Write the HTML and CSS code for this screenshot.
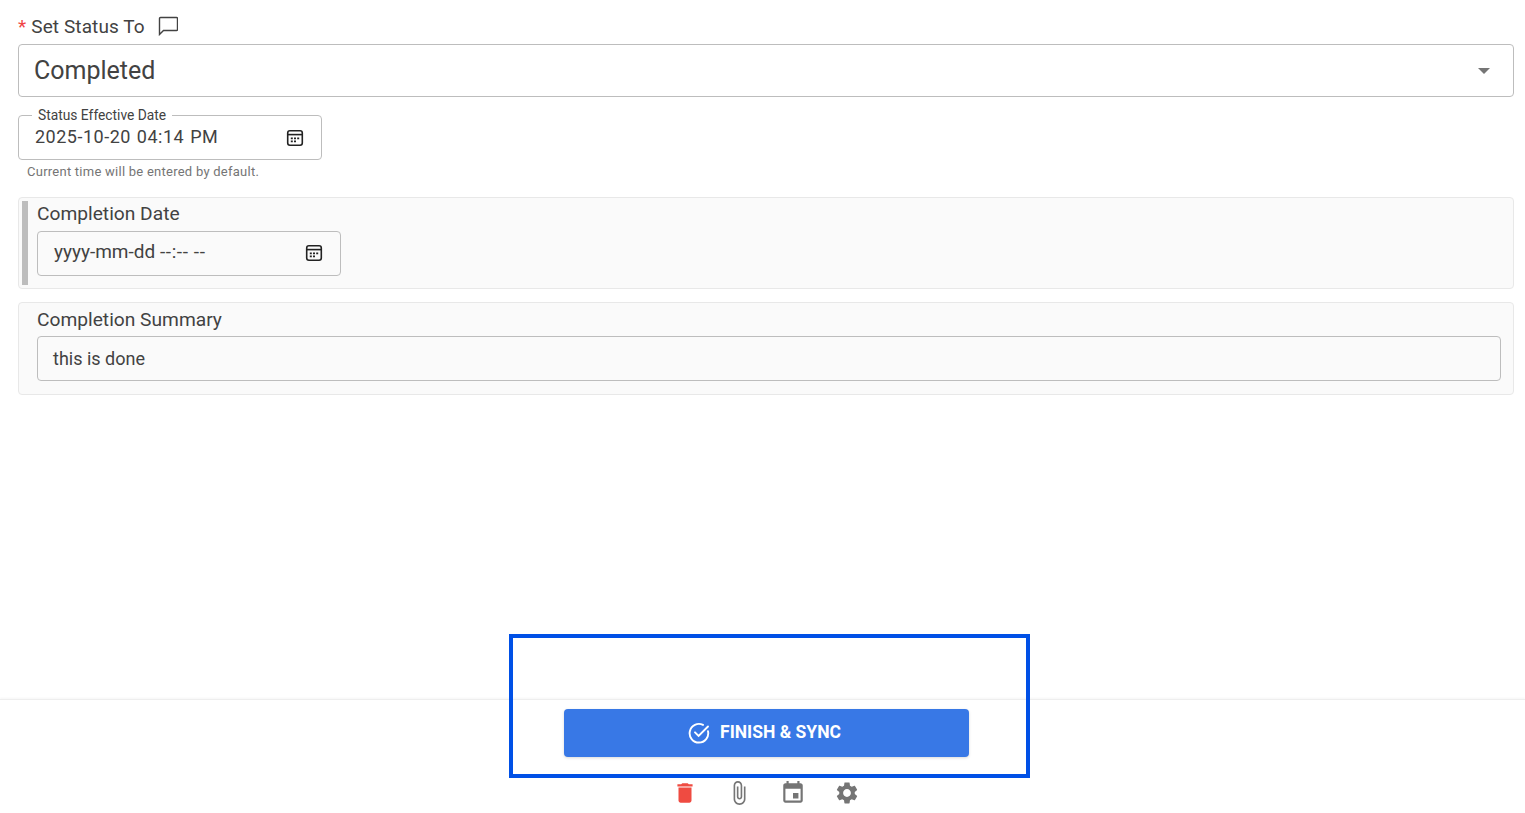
FILE: index.html
```html
<!DOCTYPE html>
<html lang="en">
<head>
    <meta charset="UTF-8">
    <meta name="viewport" content="width=device-width, initial-scale=1.0">
    <title>Set Status</title>
    <link rel="stylesheet" href="styles.css">
</head>
<body>
    <div class="page">
        <main class="form">
            <div class="status-label">
                <span class="required">*</span>
                <span>Set Status To</span>
                <svg class="comment-icon" viewBox="0 0 20 20"><path d="M1.500 18.500V2.500a1 1 0 0 1 1-1h16a1 1 0 0 1 1 1v11a1 1 0 0 1-1 1H5.500z"/></svg>
            </div>
            <div class="select-box">
                <span>Completed</span>
                <span class="caret"></span>
            </div>

            <div class="date-box">
                <span class="float-label">Status Effective Date</span>
                <span>2025-10-20 04:14 PM</span>
                <svg class="cal-icon" viewBox="0 0 18 18"><rect x="1.700" y="1.700" width="14.600" height="14.600" rx="2.200"/><path d="M1.700 5.600h14.600"/><path class="dots" d="M4.800 8.400h2v1.800h-2zM8 8.400h2v1.800H8zM11.200 8.400h2v1.800h-2zM4.800 11.400h2v1.800h-2zM8 11.400h2v1.800H8z"/></svg>
            </div>
            <div class="hint">Current time will be entered by default.</div>

            <section class="panel panel-date">
                <div class="panel-bar"></div>
                <div class="panel-body">
                    <label class="panel-label">Completion Date</label>
                    <div class="input-box input-date">
                        <span>yyyy-mm-dd <span class="time-mask">--:-- --</span></span>
                        <svg class="cal-icon" viewBox="0 0 18 18"><rect x="1.700" y="1.700" width="14.600" height="14.600" rx="2.200"/><path d="M1.700 5.600h14.600"/><path class="dots" d="M4.800 8.400h2v1.800h-2zM8 8.400h2v1.800H8zM11.200 8.400h2v1.800h-2zM4.800 11.400h2v1.800h-2zM8 11.400h2v1.800H8z"/></svg>
                    </div>
                </div>
            </section>

            <section class="panel panel-summary">
                <label class="panel-label">Completion Summary</label>
                <div class="input-box input-text">this is done</div>
            </section>
        </main>

        <footer class="footer">
            <button class="finish-btn" type="button">
                <svg class="finish-icon" viewBox="0 0 22 22"><path d="M20 9.200A9.300 9.300 0 1 1 15 2.900"/><path d="M7 10.300l3.600 3.600 9.400-9.400"/></svg>
                <span>FINISH &amp; SYNC</span>
            </button>
            <div class="actions">
                <svg class="action-icon delete" viewBox="0 0 24 24"><path d="M6 19c0 1.100.9 2 2 2h8c1.100 0 2-.9 2-2V7H6v12zM19 4h-3.500l-1-1h-5l-1 1H5v2h14V4z"/></svg>
                <svg class="action-icon" viewBox="0 0 24 24"><path d="M16.500 6v11.500c0 2.210-1.790 4-4 4s-4-1.790-4-4V5c0-1.380 1.120-2.500 2.500-2.500s2.500 1.120 2.500 2.500v10.500c0 .55-.45 1-1 1s-1-.45-1-1V6H10v9.500c0 1.380 1.120 2.500 2.500 2.500s2.500-1.120 2.500-2.500V5c0-2.210-1.790-4-4-4S7 2.790 7 5v12.500c0 3.040 2.460 5.500 5.500 5.500s5.500-2.460 5.500-5.500V6h-1.500z"/></svg>
                <svg class="action-icon" viewBox="0 0 24 24"><path d="M17 12h-5v5h5v-5zM16 1v2H8V1H6v2H5c-1.110 0-1.990.9-1.990 2L3 19c0 1.100.89 2 2 2h14c1.100 0 2-.9 2-2V5c0-1.100-.9-2-2-2h-1V1h-2zm3 18H5V8h14v11z"/></svg>
                <svg class="action-icon" viewBox="0 0 24 24"><path d="M19.140 12.940c.04-.3.06-.61.06-.94 0-.32-.02-.64-.07-.94l2.030-1.580c.18-.14.23-.41.12-.61l-1.920-3.320c-.12-.22-.37-.29-.59-.22l-2.390.96c-.5-.38-1.030-.7-1.620-.94l-.36-2.540c-.04-.24-.24-.41-.48-.41h-3.840c-.24 0-.43.17-.47.41l-.36 2.540c-.59.24-1.130.57-1.620.94l-2.390-.96c-.22-.08-.47 0-.59.22L2.740 8.870c-.12.21-.08.47.12.61l2.030 1.580c-.05.3-.09.63-.09.94s.02.64.07.94l-2.030 1.580c-.18.14-.23.41-.12.61l1.920 3.320c.12.22.37.29.59.22l2.390-.96c.5.38 1.030.7 1.620.94l.36 2.540c.05.24.24.41.48.41h3.840c.24 0 .44-.17.47-.41l.36-2.540c.59-.24 1.130-.56 1.620-.94l2.390.96c.22.08.47 0 .59-.22l1.920-3.320c.12-.22.07-.47-.12-.61l-2.010-1.580zM12 15.600c-1.980 0-3.600-1.620-3.600-3.600s1.620-3.600 3.600-3.600 3.600 1.620 3.600 3.600-1.620 3.600-3.600 3.600z"/></svg>
            </div>
        </footer>

        <div class="highlight-box"></div>
    </div>
</body>
</html>
```

FILE: styles.css
```css
html, body {
    margin: 0;
    padding: 0;
    background-color: #fff;
}
body {
    font-family: Roboto, "Liberation Sans", sans-serif;
    color: #3c4043;
}
.page {
    position: relative;
    display: flex;
    flex-direction: column;
    height: 813px;
    overflow: hidden;
}
.form {
    flex: 1;
    padding: 0 11px 0 18px;
}
.status-label {
    display: flex;
    align-items: center;
    height: 44px;
    padding-top: 10px;
    box-sizing: border-box;
    font-size: 19px;
    line-height: 34px;
    letter-spacing: 0.1px;
    color: #424242;
}
.required {
    color: #ef4444;
    margin-right: 5px;
}
.comment-icon {
    width: 20px;
    height: 20px;
    margin-left: 13px;
    margin-top: -3px;
    fill: none;
    stroke: #424242;
    stroke-width: 1.400;
}
.select-box {
    display: flex;
    align-items: center;
    justify-content: space-between;
    height: 53px;
    box-sizing: border-box;
    padding: 0 23px 0 15px;
    border: 1px solid #bdbdbd;
    border-radius: 4px;
    font-size: 25px;
    color: #424242;
}
.caret {
    width: 0;
    height: 0;
    border-left: 6px solid transparent;
    border-right: 6px solid transparent;
    border-top: 6px solid #757575;
}
.date-box {
    position: relative;
    display: flex;
    align-items: center;
    justify-content: space-between;
    width: 304px;
    height: 45px;
    margin-top: 18px;
    padding: 0 17px 2px 16px;
    box-sizing: border-box;
    border: 1px solid #bdbdbd;
    border-radius: 4px;
    font-size: 18px;
    letter-spacing: 0.5px;
    word-spacing: 1px;
    color: #424242;
}
.float-label {
    position: absolute;
    top: -9px;
    left: 13px;
    padding: 0 6px;
    background-color: #fff;
    font-size: 13.800px;
    line-height: 16px;
    letter-spacing: 0;
    word-spacing: 0;
}
.cal-icon {
    width: 18px;
    height: 18px;
    fill: none;
    stroke: #222;
    stroke-width: 1.600;
    margin-top: 3px;
}
.cal-icon .dots {
    fill: #222;
    stroke: none;
}
.hint {
    margin: 4px 0 0 9px;
    font-size: 13px;
    line-height: 16px;
    color: #757575;
    letter-spacing: 0.25px;
}
.panel {
    box-sizing: border-box;
    margin-top: 17px;
    border: 1px solid #e8e8e8;
    border-radius: 4px;
    background-color: #fafafa;
}
.panel-date {
    display: flex;
    height: 92px;
    padding: 3px;
}
.panel-date .panel-label {
    line-height: 26px;
}
.panel-bar {
    width: 6px;
    background-color: #bdbdbd;
}
.panel-body {
    flex: 1;
    padding-left: 9px;
}
.panel-summary {
    height: 93px;
    margin-top: 13px;
    padding: 3px 12px 0 18px;
}
.panel-label {
    display: block;
    font-size: 19.200px;
    line-height: 28px;
    height: 30px;
    color: #424242;
}
.input-box {
    display: flex;
    align-items: center;
    height: 45px;
    box-sizing: border-box;
    padding: 0 15px;
    border: 1px solid #bdbdbd;
    border-radius: 4px;
    font-size: 19px;
    color: #424242;
}
.input-text {
    font-size: 18px;
}
.input-date {
    justify-content: space-between;
    width: 304px;
    padding: 0 17px 5px 16px;
}
.input-date .cal-icon {
    margin-top: 3px;
}
.time-mask {
    letter-spacing: 0.6px;
}
.footer {
    display: flex;
    flex-direction: column;
    align-items: center;
    height: 114px;
    box-sizing: border-box;
    padding: 9px 0 0 8px;
    border-top: 1px solid #eeeeee;
    box-shadow: 0 -1px 2px rgba(0, 0, 0, 0.04);
}
.finish-btn {
    display: flex;
    align-items: center;
    justify-content: center;
    gap: 10px;
    width: 405px;
    height: 48px;
    padding: 0 4px 2px 0;
    border: none;
    border-radius: 4px;
    background-color: #3878e6;
    color: #fff;
    font-family: inherit;
    font-size: 17.500px;
    font-weight: 700;
    box-shadow: 0 1px 3px rgba(0, 0, 0, 0.15);
}
.finish-icon {
    width: 22px;
    height: 22px;
    margin-top: 2px;
    fill: none;
    stroke: #fff;
    stroke-width: 1.900;
    stroke-linecap: round;
}
.actions {
    display: flex;
    gap: 28px;
    margin: 23px 1px 0 0;
}
.action-icon {
    width: 26px;
    height: 26px;
    fill: #757575;
}
.action-icon.delete {
    fill: #ef4b41;
}
.highlight-box {
    position: absolute;
    left: 509px;
    top: 634px;
    width: 521px;
    height: 144px;
    box-sizing: border-box;
    border: 4px solid #0050e6;
}
```
